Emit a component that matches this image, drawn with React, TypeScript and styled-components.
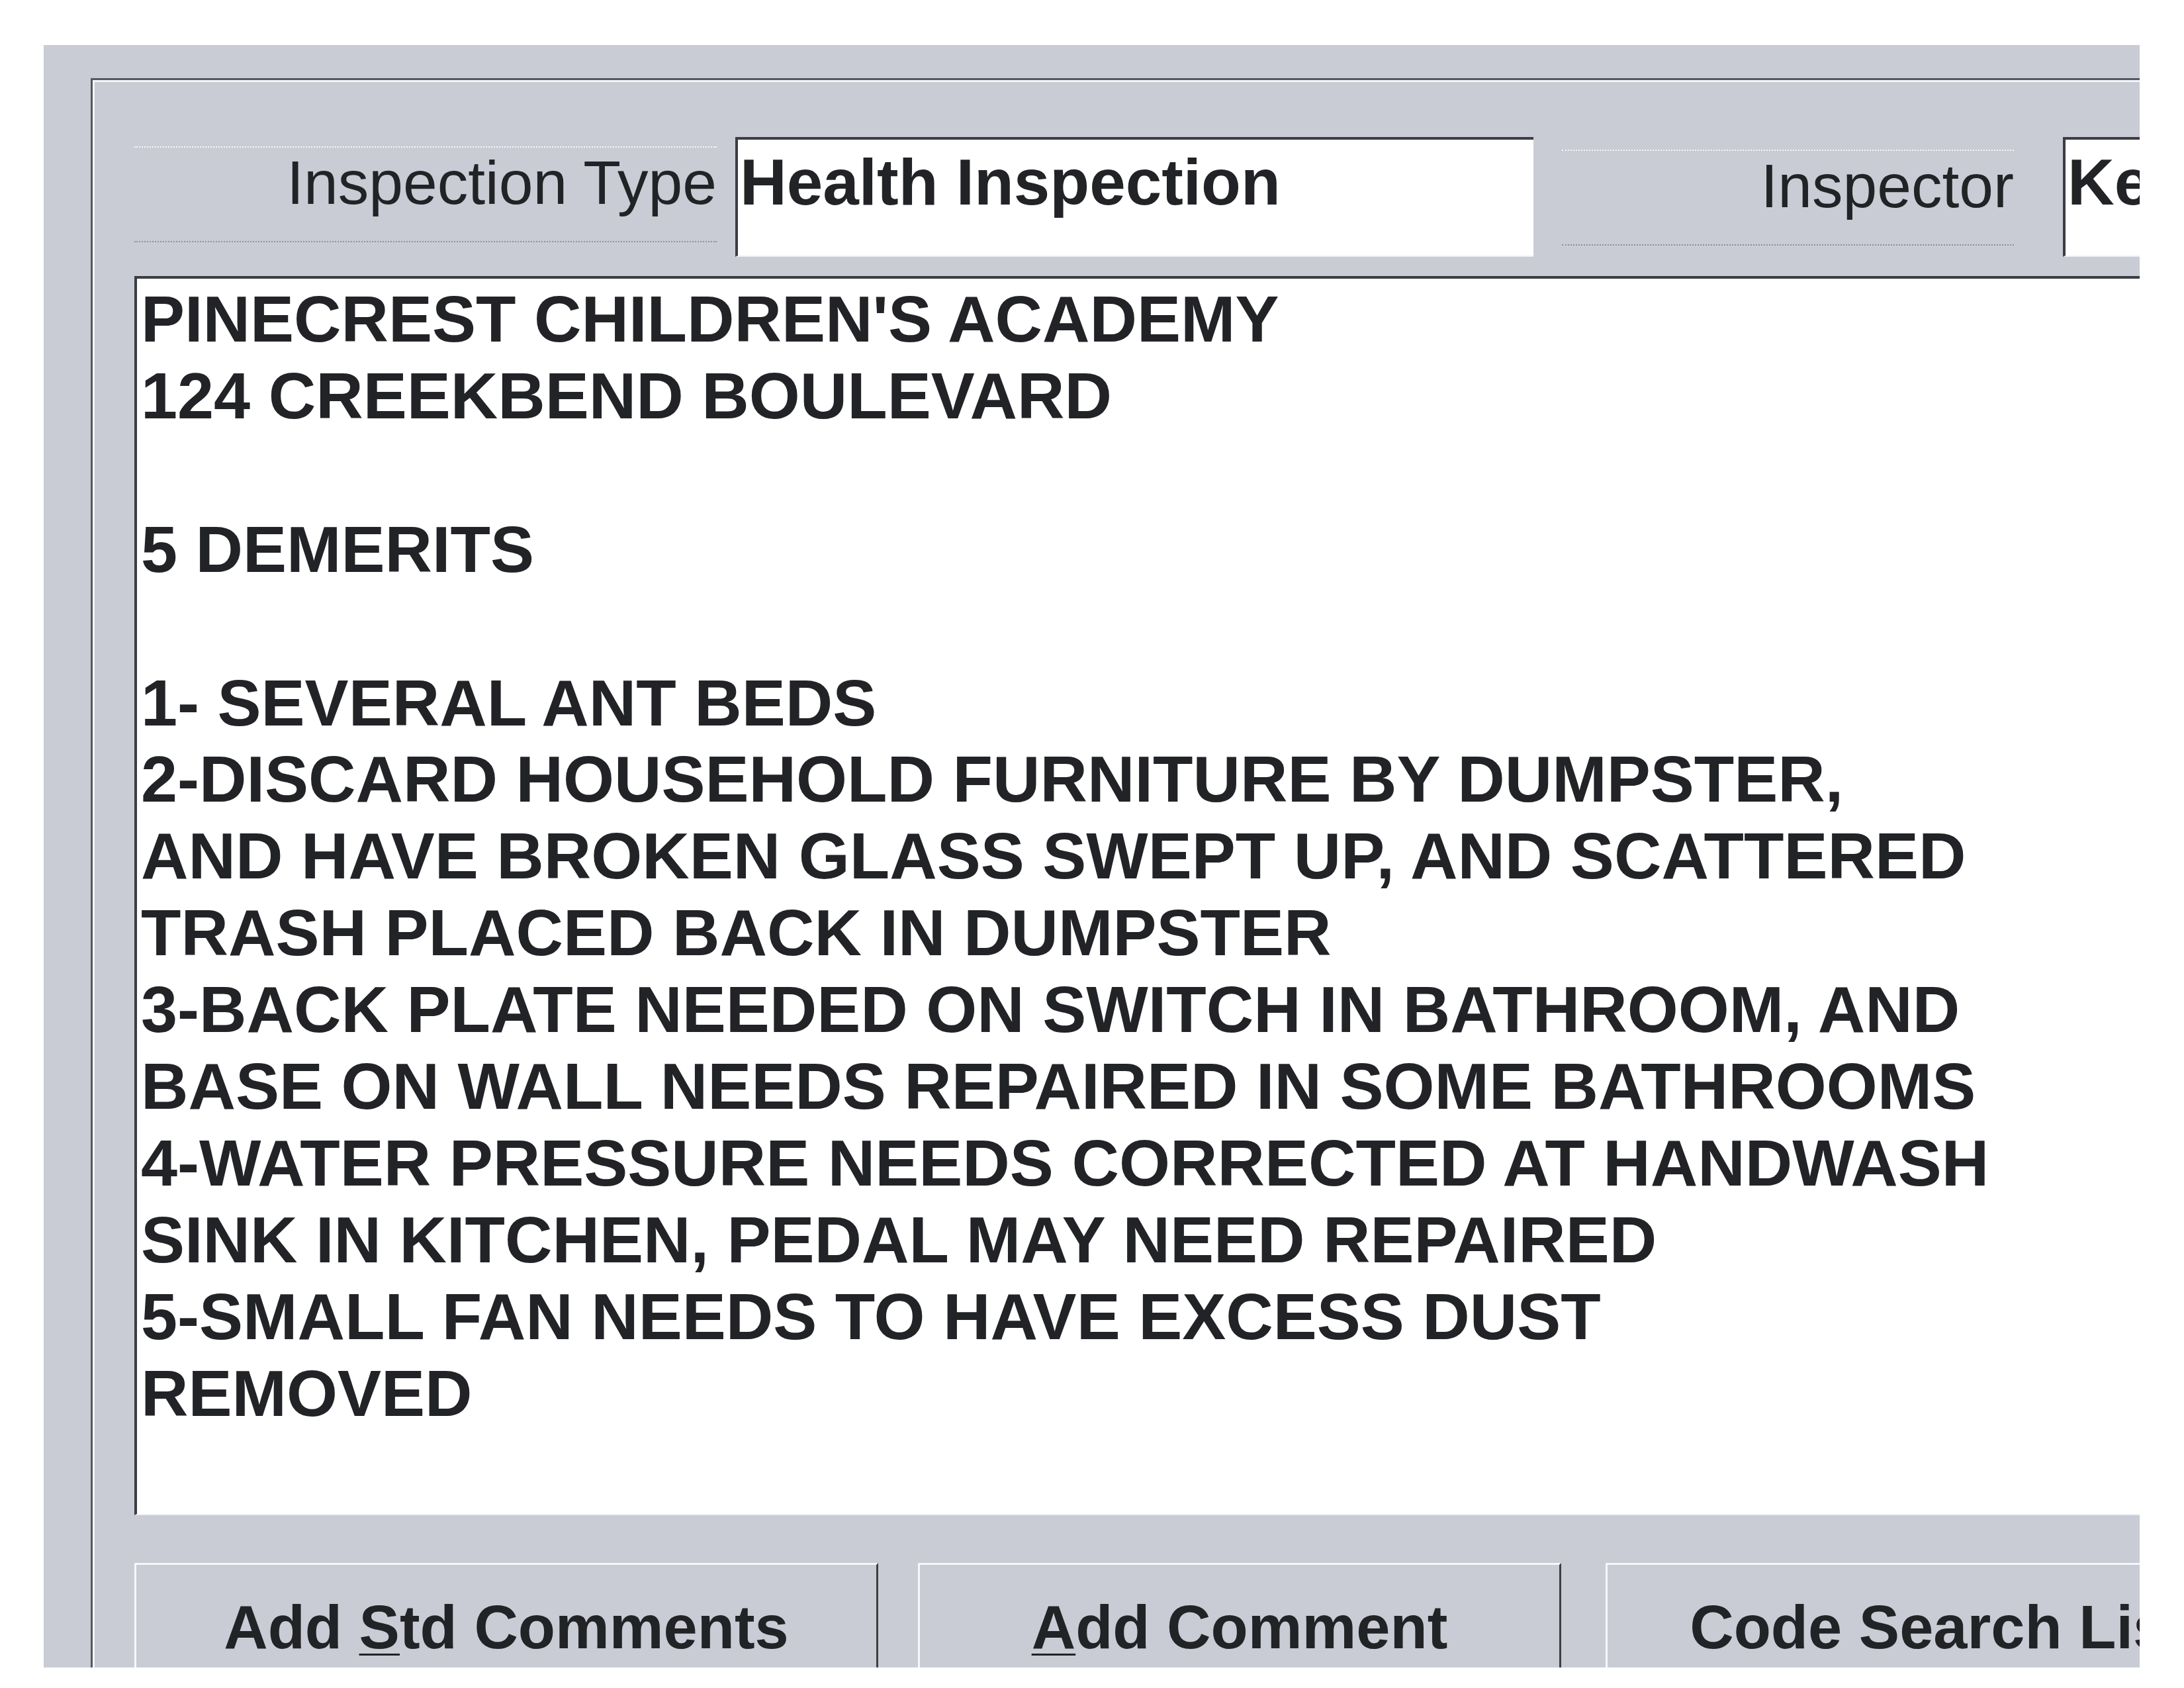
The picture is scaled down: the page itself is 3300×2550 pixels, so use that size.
import React, { FC } from 'react'
import styled, { createGlobalStyle } from 'styled-components'

const FONT = '"Liberation Sans", Arial, sans-serif'

const COMMENT_LINES = [
  "PINECREST CHILDREN'S ACADEMY",
  '124 CREEKBEND BOULEVARD',
  '',
  '5 DEMERITS',
  '',
  '1- SEVERAL ANT BEDS',
  '2-DISCARD HOUSEHOLD FURNITURE BY DUMPSTER,',
  'AND HAVE BROKEN GLASS SWEPT UP, AND SCATTERED',
  'TRASH PLACED BACK IN DUMPSTER',
  '3-BACK PLATE NEEDED ON SWITCH IN BATHROOM, AND',
  'BASE ON WALL NEEDS REPAIRED IN SOME BATHROOMS',
  '4-WATER PRESSURE NEEDS CORRECTED AT HANDWASH',
  'SINK IN KITCHEN, PEDAL MAY NEED REPAIRED',
  '5-SMALL FAN NEEDS TO HAVE EXCESS DUST',
  'REMOVED',
]

const App: FC = () => (
  <Page>
    <GlobalStyle />
    <Window>
      <Panel>
        <FieldRow>
          <FieldLabel width={880} offset={14}>
            Inspection Type
          </FieldLabel>
          <FieldValue width={1206} gap={28}>
            Health Inspection
          </FieldValue>
          <FieldLabel width={683} offset={19} gap={43}>
            Inspector
          </FieldLabel>
          <FieldValue width={800} gap={74}>
            Ke
          </FieldValue>
        </FieldRow>

        <CommentBox>
          {COMMENT_LINES.map((line, i) => (
            <CommentLine key={i}>{line || '\u00a0'}</CommentLine>
          ))}
        </CommentBox>

        <ButtonRow>
          <ActionButton width={1124}>
            <span>
              Add <u>S</u>td Comments
            </span>
          </ActionButton>
          <ActionButton width={972} gap={60}>
            <span>
              <u>A</u>dd Comment
            </span>
          </ActionButton>
          <ActionButton width={1006} gap={67}>
            <span>Code Search List</span>
          </ActionButton>
        </ButtonRow>
      </Panel>
    </Window>
  </Page>
)

const GlobalStyle = createGlobalStyle`
  html, body {
    margin: 0;
    padding: 0;
    background: #ffffff;
  }
  * {
    box-sizing: border-box;
  }
`

const Page = styled.div`
  width: 3300px;
  height: 2550px;
  padding: 68px 0 0 66px;
  background: #ffffff;
  overflow: hidden;
  font-family: ${FONT};
  color: #222326;
`

const Window = styled.div`
  width: 3167px;
  height: 2451px;
  padding: 50px 0 0 71px;
  background: #c9ccd4;
  overflow: hidden;
`

const Panel = styled.div`
  width: 3300px;
  height: 2600px;
  padding: 86px 0 0 63px;
  border-top: 3px solid #55585e;
  border-left: 3px solid #55585e;
  box-shadow: inset 3px 3px 0 #f4f5f8;
`

const FieldRow = styled.div`
  display: flex;
  align-items: flex-start;
`

const FieldLabel = styled.div<{ width: number; offset: number; gap?: number }>`
  flex: none;
  width: ${(p) => p.width}px;
  height: 145px;
  margin-top: ${(p) => p.offset}px;
  margin-left: ${(p) => p.gap ?? 0}px;
  display: flex;
  justify-content: flex-end;
  align-items: flex-start;
  border-top: 2px dotted rgba(255, 255, 255, 0.85);
  border-bottom: 2px dotted #8d9098;
  font-size: 93px;
  font-weight: 400;
  line-height: normal;
  white-space: nowrap;
`

const FieldValue = styled.div<{ width: number; gap: number }>`
  flex: none;
  width: ${(p) => p.width}px;
  height: 181px;
  margin-left: ${(p) => p.gap}px;
  padding: 8px 0 0 3px;
  background: #ffffff;
  border-top: 4px solid #3b3d42;
  border-left: 4px solid #3b3d42;
  border-bottom: 2px solid #eef0f4;
  font-size: 98px;
  font-weight: 700;
  line-height: normal;
  white-space: nowrap;
  overflow: hidden;
`

const CommentBox = styled.div`
  width: 3200px;
  height: 1872px;
  margin-top: 29px;
  padding: 3px 0 0 6px;
  background: #ffffff;
  border-top: 4px solid #3b3d42;
  border-left: 4px solid #3b3d42;
  border-bottom: 2px solid #eef0f4;
  overflow: hidden;
`

const CommentLine = styled.div`
  font-size: 99px;
  font-weight: 700;
  line-height: 115.9px;
  white-space: pre;
`

const ButtonRow = styled.div`
  display: flex;
  align-items: flex-start;
  margin-top: 72px;
`

const ActionButton = styled.button<{ width: number; gap?: number }>`
  flex: none;
  width: ${(p) => p.width}px;
  height: 184px;
  margin-left: ${(p) => p.gap ?? 0}px;
  padding: 10px 0 0;
  display: flex;
  justify-content: center;
  align-items: center;
  background: #c9ccd4;
  border-top: 3px solid #f6f7fa;
  border-left: 3px solid #f6f7fa;
  border-right: 3px solid #3d3f44;
  border-bottom: 3px solid #3d3f44;
  font-family: ${FONT};
  font-size: 92px;
  font-weight: 700;
  color: #222326;
  white-space: pre;
  overflow: hidden;

  u {
    text-decoration-thickness: 3px;
    text-underline-offset: 8px;
  }
`

export default App
